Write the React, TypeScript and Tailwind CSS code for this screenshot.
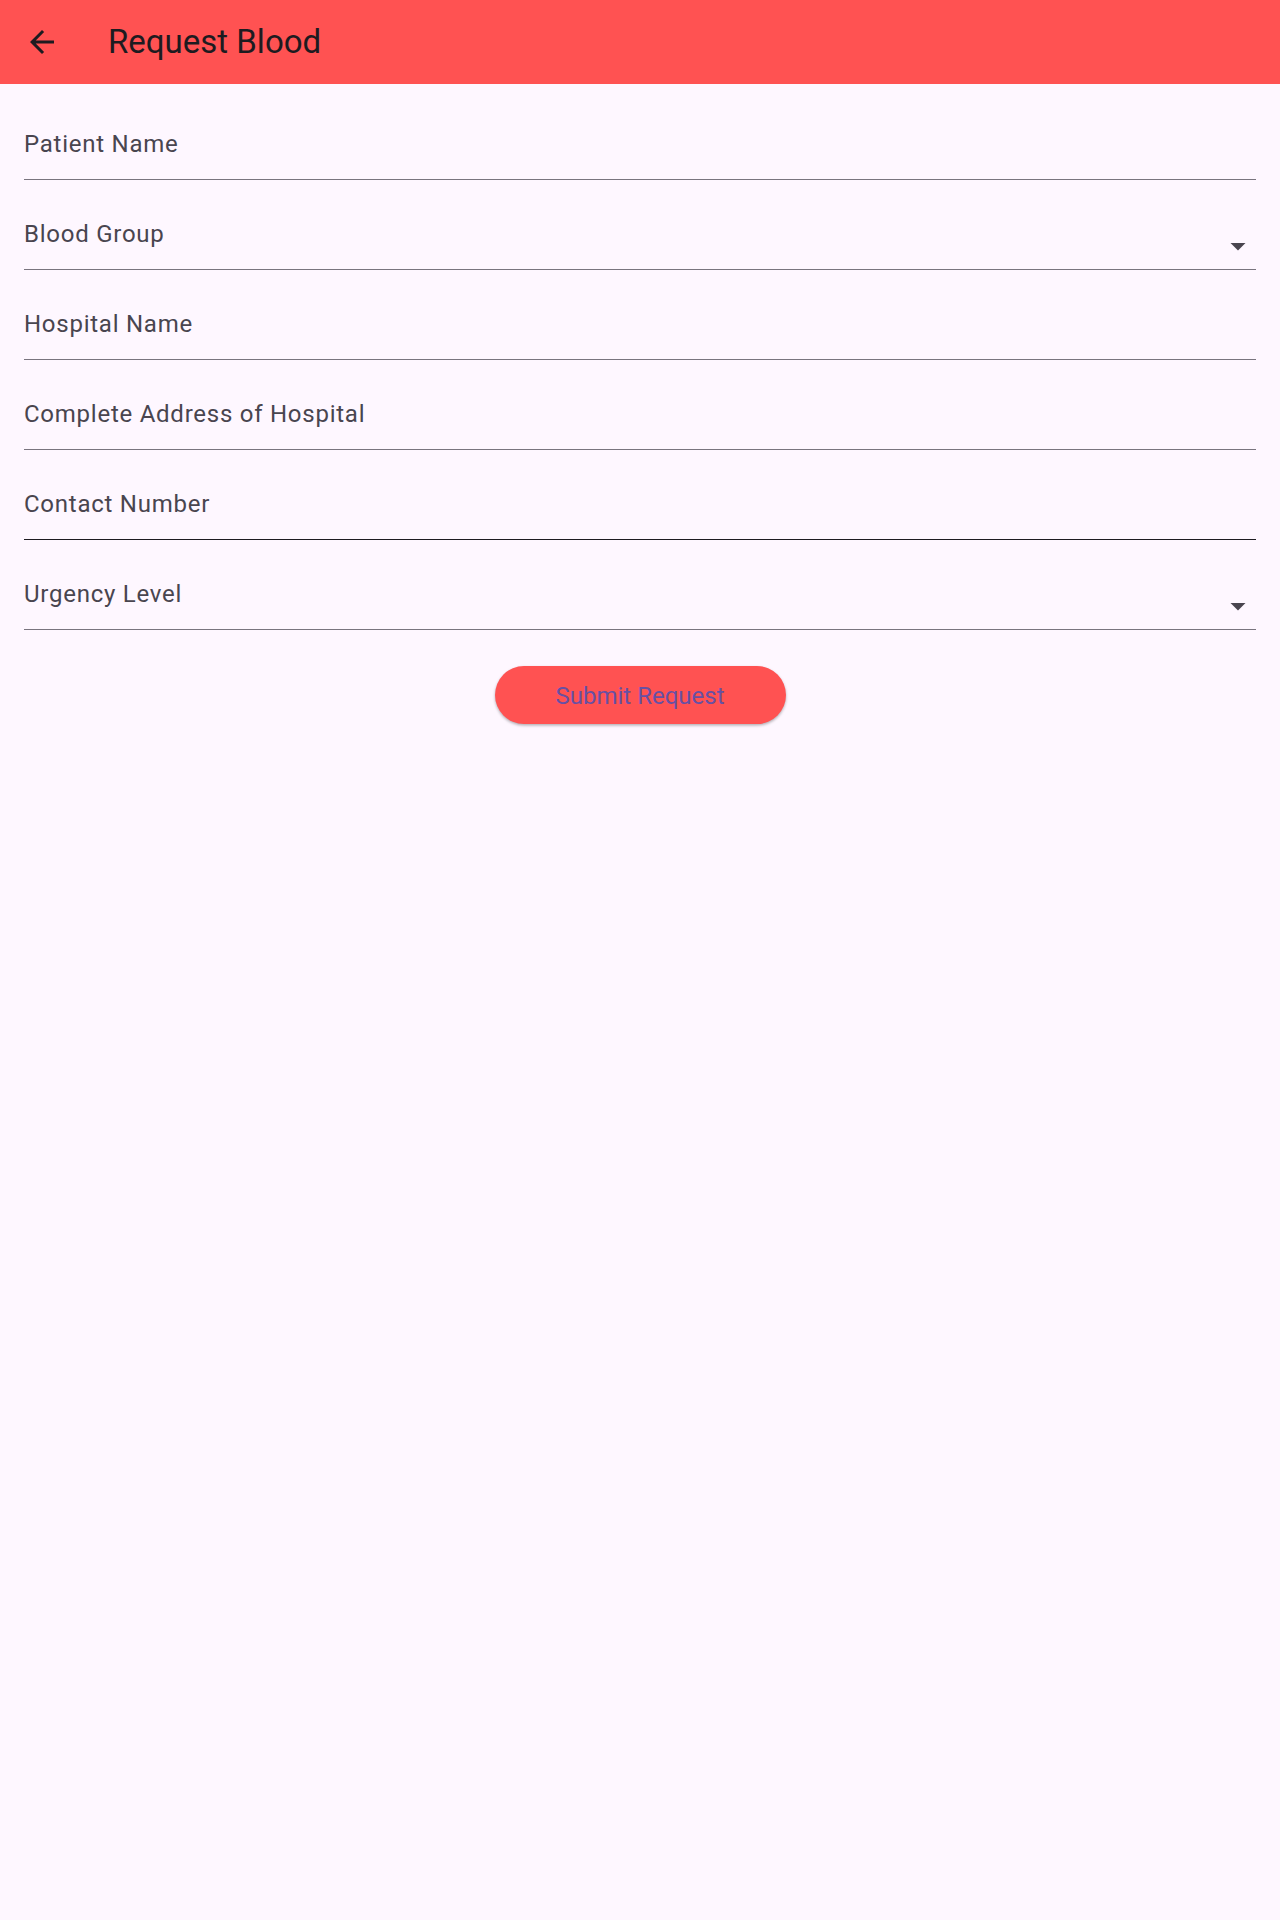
import { ReactNode } from 'react';

const FIELDS = [
  { label: 'Patient Name' },
  { label: 'Blood Group', dropdown: true },
  { label: 'Hospital Name' },
  { label: 'Complete Address of Hospital' },
  { label: 'Contact Number', hovered: true },
  { label: 'Urgency Level', dropdown: true },
];

function ArrowBack() {
  return (
    <svg width="36" height="36" viewBox="0 0 24 24" fill="#1D1B20">
      <path d="M20 11H7.83l5.59-5.59L12 4l-8 8 8 8 1.41-1.41L7.83 13H20v-2z" />
    </svg>
  );
}

function ArrowDropDown() {
  return (
    <svg width="36" height="36" viewBox="0 0 24 24" fill="#49454F">
      <path d="M7 10l5 5 5-5z" />
    </svg>
  );
}

function Field({ label, dropdown, hovered }: { label: string; dropdown?: boolean; hovered?: boolean }) {
  let trailing: ReactNode = null;
  if (dropdown) trailing = <div className="mb-[4.5px] shrink-0"><ArrowDropDown /></div>;
  return (
    <div className="h-[90px] flex flex-col justify-end">
      <div className="flex items-end justify-between">
        <span className="pb-[23px] text-[24px] leading-[24px] tracking-[0.75px] text-[#49454F]">{label}</span>
        {trailing}
      </div>
      <div className={hovered ? 'h-[1.5px] bg-[#1D1B20]' : 'h-[1.5px] bg-[#79747E]'} />
    </div>
  );
}

export default function App() {
  return (
    <div className="min-h-[1920px] bg-[#FEF7FF]" style={{ fontFamily: 'Roboto, "Noto Sans", sans-serif' }}>
      {/* App bar */}
      <header className="h-[84px] bg-[#FF5252] flex items-center">
        <div className="w-[84px] h-[84px] flex items-center justify-center">
          <ArrowBack />
        </div>
        <h1 className="ml-[24px] mb-[2px] text-[33px] leading-none text-[#1D1B20]">Request Blood</h1>
      </header>

      {/* Form */}
      <main className="px-6 pt-[6px]">
        {FIELDS.map(f => (
          <Field key={f.label} label={f.label} dropdown={f.dropdown} hovered={f.hovered} />
        ))}
        <div className="flex justify-center mt-[36px]">
          <button className="w-[291px] h-[58px] pt-[2px] rounded-full bg-[#FF5252] text-[#6750A4] text-[24px] leading-none shadow-[0_1.5px_3px_rgba(0,0,0,0.3)]">
            Submit Request
          </button>
        </div>
      </main>
    </div>
  );
}
